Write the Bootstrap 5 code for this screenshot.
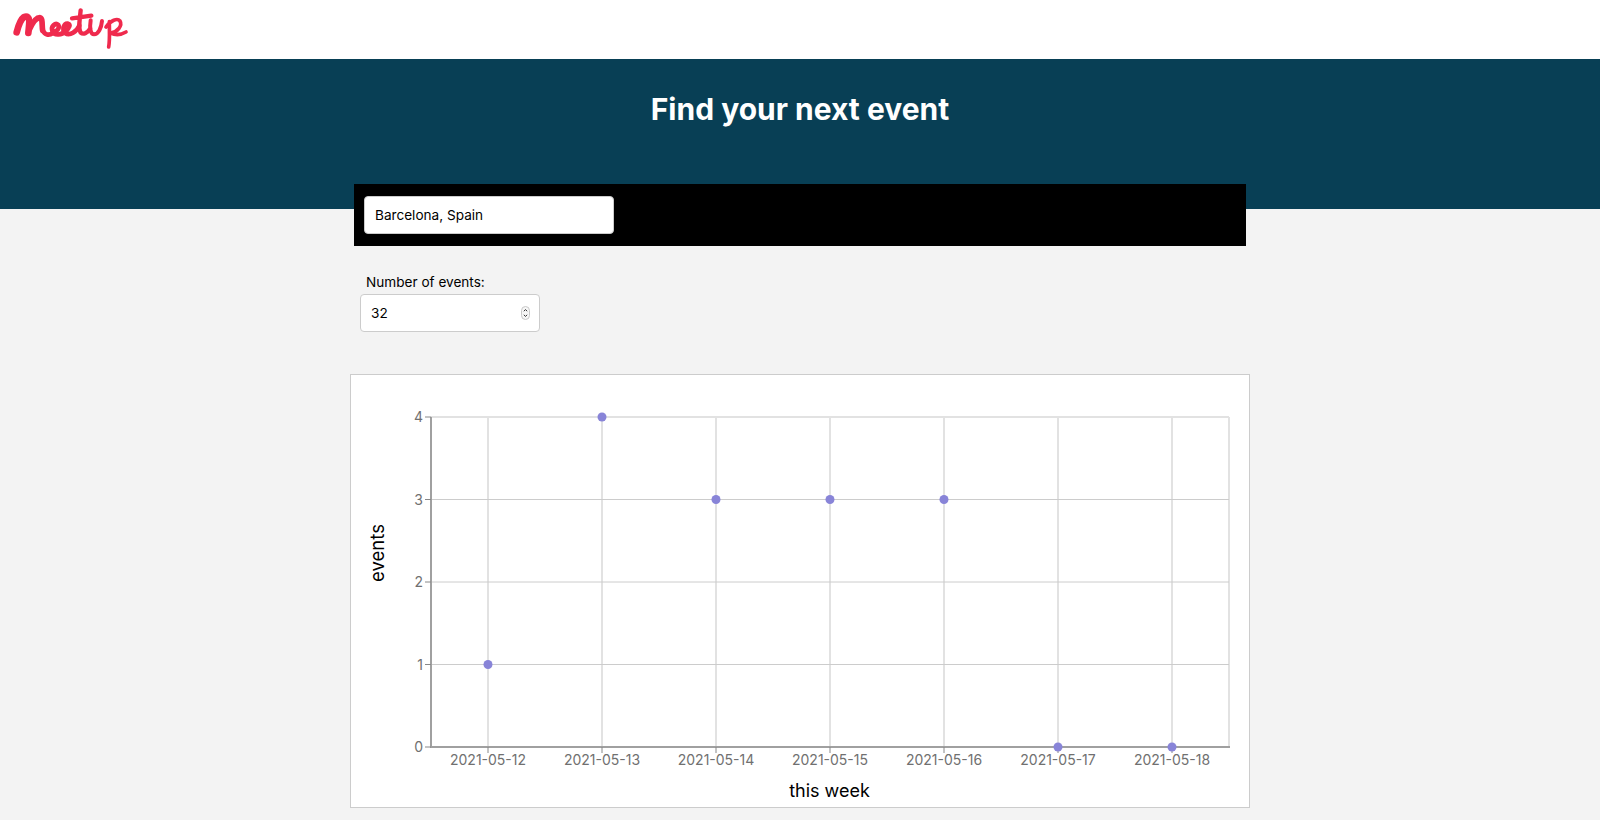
<!DOCTYPE html>
<html lang="en">
<head>
    <meta charset="UTF-8">
    <meta name="viewport" content="width=device-width, initial-scale=1.0">
    <title>Meetup</title>
    <link href="https://cdn.jsdelivr.net/npm/bootstrap@5.3.3/dist/css/bootstrap.min.css" rel="stylesheet">
    <style>
        body {
            background-color: #f3f3f3;
            font-family: Inter, "Liberation Sans", sans-serif;
            color: #000;
        }

        .top-bar {
            height: 59px;
            padding: 5px 0 0 10px;
        }

        .top-bar svg {
            display: block;
        }

        .hero {
            height: 150px;
            background-color: #083f55;
            padding-top: 30px;
        }

        .hero h1 {
            font-size: 30px;
            font-weight: 700;
            line-height: 40px;
        }

        .page-col {
            width: 900px;
            margin: 0 auto;
        }

        .search-strip {
            width: 892px;
            height: 62px;
            margin: -25px 0 0 4px;
            padding: 12px 10px;
            background: #000;
            position: relative;
        }

        .city-input {
            width: 250px;
            height: 38px;
            padding: 0 10px;
            font-size: 13.6px;
            color: #000;
            border: 1px solid #ccc;
            border-radius: 4px;
        }

        .count-wrap {
            width: 180px;
            margin: 26px 0 0 10px;
        }

        .count-wrap label {
            display: block;
            font-size: 13.6px;
            line-height: 20px;
            margin: 0 0 2px 6px;
        }

        .count-field {
            height: 38px;
            padding: 0 9px 0 10px;
            font-size: 13.6px;
            background: #fff;
            border: 1px solid #ccc;
            border-radius: 4px;
        }

        .chart-box {
            height: 434px;
            margin-top: 42px;
            background: #fff;
            border: 1px solid #ccc;
        }

        .chart-box svg {
            display: block;
        }
    </style>
</head>
<body>
    <div class="top-bar bg-white">
        <svg width="120" height="48" viewBox="0 0 360 144" fill="none" stroke="#ef2a4d" stroke-linecap="round" stroke-linejoin="round">
            <path stroke-width="20" d="M20 82C25 62 31 44 42 36C52 32 58 38 58 48C58 60 56 72 55 84"/>
            <path stroke-width="17" d="M58 74C66 56 78 38 90 38C99 40 95 62 98 76"/>
            <path stroke-width="14" d="M98 76C104 90 116 92 130 84C142 78 150 68 145 60C136 52 122 64 127 78C134 94 155 90 168 78C178 68 183 58 174 56C162 54 155 74 165 84C180 94 200 80 208 62"/>
            <path stroke-width="13" d="M212 16C209 46 204 72 212 83C220 90 232 84 240 72M186 40C206 38 226 35 244 32"/>
            <path stroke-width="12" d="M242 46C238 70 242 88 252 88C266 88 274 68 276 48"/>
            <path stroke-width="11" d="M298 50C298 78 300 104 296 126M288 66C302 46 322 38 330 48C338 62 322 82 302 84C318 92 336 88 348 81"/>
        </svg>
    </div>

    <div class="hero text-center text-white">
        <h1 class="m-0">Find your next event</h1>
    </div>

    <div class="page-col">
        <div class="search-strip">
            <input class="city-input d-block bg-white" type="text" value="Barcelona, Spain">
        </div>

        <div class="count-wrap">
            <label for="eventCount">Number of events:</label>
            <div id="eventCount" class="count-field d-flex align-items-center justify-content-between">
                <span>32</span>
                <svg width="9" height="14" viewBox="0 0 9 14" fill="none">
                    <rect x="0.5" y="0.5" width="8" height="13" rx="4" fill="#f6f6f6" stroke="#c8c8c8"/>
                    <path d="M2.8 5.2L4.5 3.6L6.2 5.2M2.8 8.8L4.5 10.4L6.2 8.8" stroke="#333"/>
                </svg>
            </div>
        </div>

        <div class="chart-box">
            <svg id="chart" width="898" height="432" font-family="Inter, sans-serif"></svg>
        </div>
    </div>

    <script>
        // chart box starts at 351,375 on the page
        const plot = { left: 80, right: 878, top: 42, bottom: 372 };
        const dates = ['2021-05-12', '2021-05-13', '2021-05-14', '2021-05-15', '2021-05-16', '2021-05-17', '2021-05-18'];
        const counts = [1, 4, 3, 3, 3, 0, 0];
        const xAt = i => 137 + i * 114;
        const yAt = v => plot.bottom - v * (plot.bottom - plot.top) / 4;

        let out = '';
        dates.forEach((d, i) => {
            out += `<line x1="${xAt(i)}" y1="${plot.top}" x2="${xAt(i)}" y2="${plot.bottom}" stroke="#e2e2e2" stroke-width="2"/>`;
        });
        out += `<line x1="${plot.right}" y1="${plot.top}" x2="${plot.right}" y2="${plot.bottom}" stroke="#e2e2e2" stroke-width="2"/>`;
        [1, 2, 3, 4].forEach(v => {
            out += `<line x1="${plot.left}" y1="${yAt(v)}" x2="${plot.right}" y2="${yAt(v)}" stroke="${v === 4 ? '#e2e2e2' : '#ccc'}" stroke-width="${v === 4 ? 2 : 1}"/>`;
        });
        out += `<path d="M${plot.left} ${plot.top}V${plot.bottom}H${plot.right + 1}" fill="none" stroke="#a0a0a0" stroke-width="2"/>`;
        [0, 1, 2, 3, 4].forEach(v => {
            out += `<line x1="${plot.left - 6}" y1="${yAt(v)}" x2="${plot.left}" y2="${yAt(v)}" stroke="#888"/>`;
            out += `<text x="${plot.left - 8}" y="${yAt(v) + 5}" text-anchor="end" font-size="14" fill="#707070">${v}</text>`;
        });
        dates.forEach((d, i) => {
            out += `<line x1="${xAt(i)}" y1="${plot.bottom}" x2="${xAt(i)}" y2="${plot.bottom + 6}" stroke="#888"/>`;
            out += `<text x="${xAt(i)}" y="${plot.bottom + 18}" text-anchor="middle" font-size="14" fill="#707070">${d}</text>`;
        });
        counts.forEach((c, i) => {
            out += `<circle cx="${xAt(i)}" cy="${yAt(c)}" r="4.5" fill="#8884d8"/>`;
        });
        out += `<text x="478.5" y="422" text-anchor="middle" font-size="18" fill="#000">this week</text>`;
        out += `<text transform="translate(33 178) rotate(-90)" text-anchor="middle" font-size="18.5" fill="#000">events</text>`;
        document.getElementById('chart').innerHTML = out;
    </script>

    <script src="https://cdn.jsdelivr.net/npm/bootstrap@5.3.3/dist/js/bootstrap.bundle.min.js"></script>
</body>
</html>
